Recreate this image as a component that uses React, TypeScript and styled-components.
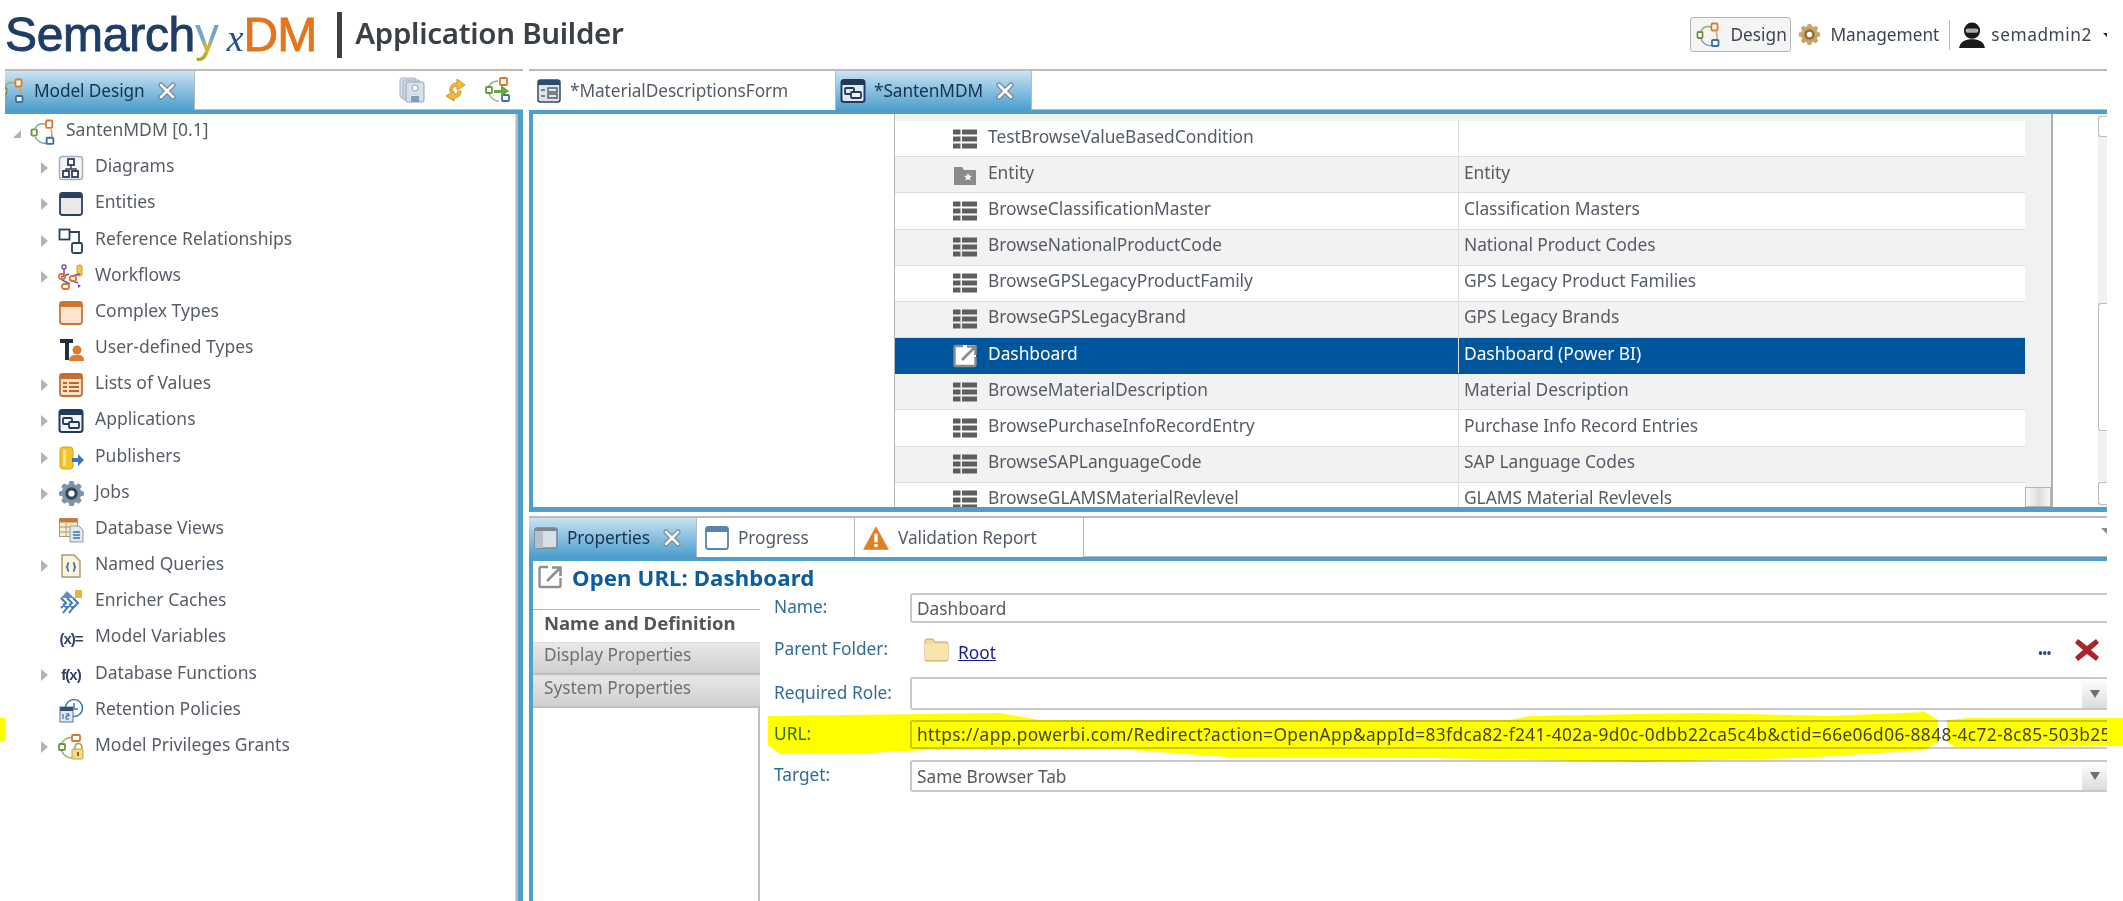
import React from "react";
import styled, { createGlobalStyle } from "styled-components";

const Global = createGlobalStyle`
  html, body { margin: 0; padding: 0; background: #fff; }
  body { font-family: "Noto Sans", "Liberation Sans", sans-serif; overflow: hidden; }
`;
const UI = `"Noto Sans", "Liberation Sans", sans-serif`;
const BLUE = "#4d9fcd";

const Page = styled.div`
  position: relative; width: 2123px; height: 901px; overflow: hidden; background: #fff;
  display: flex; flex-direction: column;
`;
const Header = styled.header`
  height: 69px; flex: none; display: flex; align-items: flex-start; padding: 0 16px 0 5px; box-sizing: border-box;
`;
const Logo = styled.div`
  display: flex; align-items: baseline; height: 69px; line-height: 69px;
  font-family: "Liberation Sans", sans-serif; font-size: 48px; letter-spacing: -.3px; -webkit-text-stroke: .9px currentColor;
  color: #1f3d66;
`;
const LogoY = styled.span`
  background: linear-gradient(180deg, #6fa6cf 0 55%, #e2b52c 70%, #7f9e35 100%);
  -webkit-background-clip: text; background-clip: text; color: transparent; -webkit-text-stroke: 0;
`;
const LogoX = styled.span`
  font-family: "Liberation Serif", serif; font-style: italic; font-size: 38px; margin-left: 8px; color: #1f4f86; -webkit-text-stroke: 0; letter-spacing: 0;
`;
const LogoDM = styled.span` color: #e4751b; letter-spacing: -1px; `;
const TitleBar = styled.div`
  width: 5px; height: 46px; background: #3b4047; margin: 12px 13px 0 21px;
`;
const Title = styled.div`
  font-family: ${UI}; font-size: 29.5px; font-weight: 600; color: #3b4047; line-height: 66px; letter-spacing: -.3px;
`;
const HeaderRight = styled.div`
  margin-left: auto; display: flex; align-items: center; height: 69px; font-size: 17.3px; color: #3d4452; box-sizing: border-box;
`;
const DesignBtn = styled.div`
  width: 101px; height: 35px; box-sizing: border-box; border: 1px solid #b4b4b4; border-radius: 3px; background: #f4f4f4;
  display: flex; align-items: center; gap: 8px; padding-left: 5px; margin-right: 7px;
`;
const HeaderLink = styled.span<{ $ml: number; $ls?: number }>`
  margin: 0 9px 0 ${p => p.$ml}px; letter-spacing: ${p => p.$ls || 0}px;
`;
const VSep = styled.div` width: 1px; height: 30px; background: #bbb; margin: 0 8px 0 1px; `;
const Caret = styled.div`
  width: 0; height: 0; border-top: 4px solid #222; border-left: 4px solid transparent; margin-left: 2px;
`;
const Main = styled.div`
  flex: 1; display: flex; gap: 6px; padding: 0 16px 0 5px; min-height: 0;
`;
const LeftPanel = styled.section`
  width: 518px; flex: none; display: flex; flex-direction: column;
`;
const RightPanel = styled.section`
  flex: 1; min-width: 0; display: flex; flex-direction: column;
`;
const TabBar = styled.div`
  height: 41px; flex: none; box-sizing: border-box; border-top: 2px solid #bcbcbc; display: flex;
  border-bottom: 1px solid #bbb; align-items: stretch;
`;
const Tab = styled.div<{ $w: number; $active?: boolean; $clip?: boolean }>`
  width: ${p => p.$w}px; flex: none; box-sizing: border-box; display: flex; align-items: center; gap: 8px; padding-left: ${p => (p.$clip ? 0 : p.$active ? 4 : 7)}px;
  font-size: 17.3px; letter-spacing: -.1px;
  color: ${p => (p.$active ? "#17324c" : "#555c66")};
  background: ${p => (p.$active ? "linear-gradient(180deg,#cbe3f2 0%,#8fc3e2 45%,#4d9fcd 100%)" : "#fff")};
  border-right: 1px solid #b9b9b9; white-space: nowrap; overflow: hidden;
  margin-bottom: -1px;
`;
const ClippedIcon = styled.span` margin-left: -5px; display: inline-flex; `;
const BlueLine = styled.div` height: 4px; flex: none; background: ${BLUE}; `;
const Close = styled.span`
  margin-left: 5px; display: inline-flex;
`;
const ToolBar = styled.div`
  margin-left: auto; display: flex; align-items: center; gap: 17px; padding-right: 12px;
`;
const TreeBody = styled.div`
  flex: 1; box-sizing: border-box; border-right: 5px solid ${BLUE}; box-shadow: inset -2.5px 0 0 #b8b8b8; min-height: 0;
`;
const TreeRow = styled.div<{ $root?: boolean }>`
  height: 36.18px; display: flex; align-items: center; padding-left: ${p => (p.$root ? 8 : 36)}px; font-size: 17.5px; color: #575d66;
`;
const ArrowSlot = styled.div`
  width: 7px; height: 14px; flex: none; display: flex; align-items: center;
`;
const Arrow = styled.div`
  width: 0; height: 0; border-left: 7px solid #b3b3b3; border-top: 6px solid transparent; border-bottom: 6px solid transparent;
`;
const RootArrow = styled.div`
  width: 0; height: 0; border-right: 8px solid #b3b3b3; border-top: 8px solid transparent; margin-top: 4px;
`;
const IconSlot = styled.div`
  width: 28px; flex: none; display: flex; justify-content: center; align-items: center; margin-left: 9px;
`;
const TreeLabel = styled.span<{ $root?: boolean }>`
  margin-left: ${p => (p.$root ? 9 : 10)}px; margin-top: -6px; white-space: nowrap;
`;
const GlyphIcon = styled.span<{ $size: number }>`
  font-family: "Liberation Sans", sans-serif; font-weight: 700; color: #2f4260; font-size: ${p => p.$size}px; white-space: nowrap; letter-spacing: -1px;
`;
const TopPane = styled.div`
  height: 398px; flex: none; display: flex; border-left: 4px solid ${BLUE}; border-bottom: 5px solid ${BLUE}; overflow: hidden; box-sizing: border-box;
`;
const TableWrap = styled.div`
  width: 1159px; margin-left: 361px; flex: none; box-sizing: border-box; border-left: 1px solid #b5b5b5; border-right: 2px solid #b0b0b0; background: #f1f1f1; display: flex; overflow: hidden;
`;
const Rows = styled.div`
  width: 1130px; flex: none; padding-top: 7px; box-sizing: border-box;
`;
const Row = styled.div<{ $alt?: boolean; $sel?: boolean }>`
  height: 36.18px; box-sizing: border-box; display: grid; grid-template-columns: 564px 1fr; align-items: center;
  border-bottom: 1px solid ${p => (p.$sel ? "#00569d" : "#dedede")};
  background: ${p => (p.$sel ? "#00569d" : p.$alt ? "#f2f2f2" : "#fff")};
  color: ${p => (p.$sel ? "#fff" : "#565c65")}; font-size: 17.4px; letter-spacing: -.05px; white-space: nowrap;
`;
const NameCell = styled.div`
  display: flex; align-items: center; padding-left: 57px; gap: 10px; height: 100%; border-right: 1px solid #dedede; box-sizing: border-box;
`;
const CellText = styled.span` margin-top: -6px; `;
const SecondCell = styled.div` padding-left: 5px; margin-top: -6px; `;
const Thumb = styled.div`
  margin-top: auto; width: 100%; height: 20px; box-sizing: border-box; border: 1px solid #b5b5b5; background: linear-gradient(90deg,#fafafa,#dcdcdc 55%,#f8f8f8);
`;
const ScrollCol = styled.div` flex: 1; display: flex; flex-direction: column; `;
const SideSpace = styled.div` flex: 1; background: #fff; `;
const Strip = styled.div`
  width: 9px; flex: none; background: #f1f1f1; display: flex; flex-direction: column; align-items: stretch; padding-top: 2px;
`;
const StripBtn = styled.div<{ $h: number; $mt: number }>`
  height: ${p => p.$h}px; margin-top: ${p => p.$mt}px; box-sizing: border-box; background: #fff; border: 1px solid #bdbdbd; border-right: 0; border-radius: 3px 0 0 3px;
`;
const Gap = styled.div` height: 4px; flex: none; `;
const ViewMenu = styled.div`
  margin-left: auto; margin-top: 10px; width: 0; height: 0; border-top: 6px solid #8d8d8d; border-left: 6px solid transparent;
`;
const BottomPane = styled.div`
  flex: 1; min-height: 0; display: flex; flex-direction: column; border-left: 4px solid ${BLUE}; box-sizing: border-box;
`;
const Heading = styled.div`
  height: 32px; flex: none; display: flex; align-items: center; gap: 9px; padding-left: 4px; box-sizing: border-box;
  font-size: 22.2px; font-weight: 700; color: #0c5d9f; letter-spacing: .1px;
`;
const Body = styled.div` flex: 1; display: flex; min-height: 0; `;
const Sidebar = styled.div`
  width: 227px; flex: none; box-sizing: border-box; padding-top: 16px;
`;
const SideInner = styled.div`
  height: 100%; border-right: 2px solid #c0c0c0; border-top: 1px solid #b5b5b5;
`;
const SideItem = styled.div<{ $active?: boolean }>`
  height: ${p => (p.$active ? 32 : 33)}px; box-sizing: border-box; padding-left: 11px; font-size: ${p => (p.$active ? 18.5 : 17.3)}px; white-space: nowrap;
  display: flex; align-items: center; margin-right: -2px; padding-bottom: ${p => (p.$active ? 7 : 7)}px;
  font-weight: ${p => (p.$active ? 700 : 400)};
  color: ${p => (p.$active ? "#555" : "#707070")};
  background: ${p => (p.$active ? "#fff" : "linear-gradient(180deg,#e8e8e8,#cfcfcf)")};
  border-bottom: ${p => (p.$active ? "0" : "2px solid #c0c0c0")};
  border-top: ${p => (p.$active ? "0" : "1px solid #ddd")};
`;
const Form = styled.div`
  flex: 1; min-width: 0; display: grid; grid-template-columns: 136px 1fr; grid-auto-rows: min-content; padding-left: 14px; font-size: 17.3px; color: #2f6c97;
`;
const Label = styled.div<{ $h: number; $mb?: number }>`
  height: ${p => p.$h}px; margin-bottom: ${p => p.$mb || 0}px; display: flex; align-items: center; padding-bottom: 3px; box-sizing: border-box; white-space: nowrap;
`;
const Field = styled.div<{ $h: number; $mb?: number }>`
  position: relative; height: ${p => p.$h}px; margin-bottom: ${p => p.$mb || 0}px; box-sizing: border-box; border: 2px solid #c8c8c8; border-radius: 3px 0 0 3px; border-right: 0;
  color: #5a5a5a; font-size: 17.3px; padding-left: 5px; display: flex; align-items: center; overflow: hidden; white-space: nowrap;
`;
const UrlText = styled.span` color: #444; letter-spacing: .38px; `;
const Drop = styled.div`
  position: absolute; right: 0; top: 0; bottom: 0; width: 25px; background: linear-gradient(180deg,#fff,#dcdcdc); display: flex; align-items: center; justify-content: center;
  &::after { content: ""; border-top: 8px solid #6f6f6f; border-left: 5px solid transparent; border-right: 5px solid transparent; }
`;
const ParentRow = styled.div`
  height: 54px; display: flex; align-items: center; padding-left: 13px; gap: 9px; box-sizing: border-box;
`;
const RootLink = styled.a`
  color: #1e1a8a; text-decoration: underline; font-size: 17.3px; margin-top: 4px;
`;
const Dots = styled.span`
  margin-left: auto; color: #2f4f7a; font-weight: 700; font-size: 12px; letter-spacing: -.3px; margin-top: 6px;
`;
const RemoveX = styled.span` margin: 0 7px 0 15px; display: inline-flex; `;
const MarkerOverlay = styled.svg`
  position: absolute; left: 0; top: 0; pointer-events: none; mix-blend-mode: multiply;
`;

const Svg = ({ s = 26, children }: { s?: number; children: React.ReactNode }) => (
  <svg width={s} height={s} viewBox="0 0 26 26" fill="none">{children}</svg>
);

const ModelIco = ({ s = 26 }: { s?: number }) => (
  <Svg s={s}>
    <path d="M5 17c2 5 7 7 11 6.500" stroke="#7f9db8" strokeWidth="1.400" />
    <path d="M5 9C7 5 11 4 15 5" stroke="#8fb06a" strokeWidth="1.400" />
    <path d="M20 10c1.500 3 1.500 6 .5 9" stroke="#e09a5a" strokeWidth="1.400" />
    <rect x="1.500" y="10" width="5" height="6" rx="1" fill="#fff" stroke="#6d9440" strokeWidth="1.800" />
    <rect x="15.500" y="1.500" width="6" height="7" rx="1" fill="#fff" stroke="#d97a2e" strokeWidth="1.800" />
    <rect x="16" y="18" width="6.500" height="6" rx="1" fill="#fff" stroke="#3c6ea8" strokeWidth="1.800" />
  </Svg>
);
const DiagramIco = () => (
  <Svg>
    <rect x="1.500" y="1.500" width="23" height="23" rx="3" fill="#f4f4f4" stroke="#a9adb3" strokeWidth="1.500" />
    <rect x="10" y="4" width="6" height="6" fill="#fff" stroke="#2c3e59" strokeWidth="1.800" />
    <path d="M13 10v4M8 17v-3h10v3" stroke="#2c3e59" strokeWidth="1.400" />
    <rect x="5" y="16" width="6" height="6" fill="#fff" stroke="#2c3e59" strokeWidth="1.800" />
    <rect x="14" y="16" width="6" height="6" fill="#fff" stroke="#2c3e59" strokeWidth="1.800" />
  </Svg>
);
const WinIco = ({ c = "#2b4160", f = "#e4e4e4" }: { c?: string; f?: string }) => (
  <Svg>
    <rect x="2" y="2" width="22" height="22" rx="2.500" fill={f} stroke={c} strokeWidth="1.800" />
    <rect x="2" y="2" width="22" height="5" fill={c} />
  </Svg>
);
const RefIco = () => (
  <Svg>
    <rect x="1.500" y="1.500" width="10" height="10" fill="#fff" stroke="#2b4160" strokeWidth="1.800" />
    <path d="M12 4h9v11" stroke="#2b4160" strokeWidth="1.800" />
    <rect x="14" y="15" width="10" height="10" rx="1.500" fill="#fff" stroke="#2b4160" strokeWidth="1.800" />
  </Svg>
);
const FlowIco = () => (
  <Svg>
    <rect x="19" y="1" width="5" height="11" rx="2" fill="#f0c84a" stroke="#cf9a27" />
    <circle cx="6" cy="3" r="2" stroke="#7a4fa5" strokeWidth="1.500" />
    <path d="M6 5v5M3 13l8-3M14 12l8-2M12 16l8 3M4 16l8 4" stroke="#7a4fa5" strokeWidth="1.500" />
    <rect x="1" y="10" width="6" height="5" rx="2" stroke="#d9772b" strokeWidth="1.800" />
    <rect x="12" y="12" width="6" height="5" rx="2" stroke="#d9772b" strokeWidth="1.800" />
    <rect x="4" y="20" width="7" height="5" rx="2" stroke="#d9772b" strokeWidth="1.800" />
    <path d="M20 20l3 2-3 2z" fill="#7a4fa5" />
  </Svg>
);
const ComplexIco = () => <WinIco c="#cc7433" f="#fde4cf" />;
const UserTypeIco = () => (
  <Svg>
    <path d="M2 3h13v4h-4v17H7V7H2z" fill="#1e2f4a" />
    <circle cx="19" cy="14" r="4.500" fill="#dd7a32" />
    <path d="M11 25c0-5 3-6 8-6s7 1 7 6z" fill="#dd7a32" />
  </Svg>
);
const ListIco = () => (
  <Svg>
    <rect x="2" y="2" width="22" height="22" rx="2.500" fill="#fbe0c8" stroke="#c76f33" strokeWidth="1.800" />
    <rect x="2" y="2" width="22" height="5" fill="#c76f33" />
    <path d="M5 11h4M5 15h4M5 19h4M11 11h10M11 15h10M11 19h10" stroke="#b5642e" strokeWidth="2" />
  </Svg>
);
const AppIco = ({ dark = false }: { dark?: boolean }) => (
  <Svg>
    <rect x="1.500" y="2" width="23" height="22" rx="2.500" fill={dark ? "#dfeaf3" : "#f1f4f7"} stroke="#223a57" strokeWidth="2" />
    <rect x="1.500" y="2" width="23" height="5" fill="#223a57" />
    <rect x="5" y="10" width="9" height="6" rx="1" stroke="#223a57" strokeWidth="1.800" />
    <rect x="11" y="14" width="10" height="6" rx="1" fill="#f1f4f7" stroke="#223a57" strokeWidth="1.800" />
  </Svg>
);
const PubIco = () => (
  <Svg>
    <rect x="2" y="2" width="13" height="22" rx="3" fill="#f0c531" stroke="#d9a521" />
    <rect x="5" y="5" width="3" height="16" fill="#fbe38a" />
    <path d="M14 13h6V9l6 6-6 6v-4h-6z" fill="#3f79b5" />
  </Svg>
);
const GearShape = ({ c, i }: { c: string; i: string }) => (
  <>
    {[0, 45, 90, 135].map(a => (
      <rect key={a} x="10.500" y="1" width="5" height="24" rx="1.500" fill={c} transform={`rotate(${a} 13 13)`} />
    ))}
    <circle cx="13" cy="13" r="9.500" fill={c} />
    <circle cx="13" cy="13" r="6" fill={i} />
    <circle cx="13" cy="13" r="3" fill="#fff" />
  </>
);
const GearIco = ({ s = 27 }: { s?: number }) => <Svg s={s}><GearShape c="#7f94a8" i="#35475c" /></Svg>;
const MgmtGear = () => <Svg s={23}><GearShape c="#c9a56a" i="#8f6f3c" /></Svg>;
const DbViewIco = () => (
  <Svg>
    <rect x="1.500" y="1.500" width="18" height="18" fill="#f5eedb" stroke="#a99b72" />
    <rect x="1.500" y="1.500" width="18" height="4" fill="#c9782f" />
    <path d="M2 10h17M2 15h17M8 6v13" stroke="#a99b72" />
    <path d="M12 9h9l4 4v12H12z" fill="#dfe8f4" stroke="#9a9a80" />
    <path d="M15 15h7M15 18h7M15 21h7" stroke="#3d73b1" strokeWidth="1.500" />
  </Svg>
);
const QueryIco = () => (
  <Svg>
    <path d="M4 2h12l6 6v16H4z" fill="#fbf5dd" stroke="#a79c70" strokeWidth="1.500" />
    <path d="M11 10c-2 0-1 3-2 4 1 1 0 4 2 4M15 10c2 0 1 3 2 4-1 1 0 4-2 4" stroke="#3d73b1" strokeWidth="1.800" />
  </Svg>
);
const EnrichIco = () => (
  <Svg>
    <path d="M9 2l7 7H3z" fill="#5f8fc4" />
    <rect x="17" y="1" width="7" height="8" fill="#e8b73a" />
    <path d="M3 9l5 5-5 5M9 9l5 5-5 5M15 9l5 5-5 5M5 15l4 4-4 5M11 15l4 4-4 5" stroke="#3f79c0" strokeWidth="2" />
  </Svg>
);
const RetentionIco = () => (
  <Svg>
    <circle cx="16" cy="10" r="8.500" fill="#fff" stroke="#3f7fb0" strokeWidth="1.600" />
    <path d="M16 5v6h4" stroke="#3f7fb0" strokeWidth="1.500" />
    <rect x="2" y="9" width="13" height="15" fill="#dfe9f2" stroke="#5b7590" />
    <rect x="2" y="9" width="13" height="4" fill="#2f5377" />
    <path d="M5 16v5M8 16h3v2H8v3h3" stroke="#2f5377" />
  </Svg>
);
const PrivIco = () => (
  <Svg>
    <path d="M16 4C9 2 3 7 3 13c0 6 5 11 11 11" stroke="#8eb06d" strokeWidth="1.400" />
    <rect x="1" y="10" width="6" height="6" rx="1" fill="#fff" stroke="#6d9440" strokeWidth="1.800" />
    <rect x="14" y="1" width="8" height="6" rx="1" fill="#fff" stroke="#d9772b" strokeWidth="1.800" />
    <path d="M17 15v-2a3.500 3.500 0 017 0v2" stroke="#b99a3c" strokeWidth="1.600" />
    <rect x="14" y="15" width="11" height="10" rx="1" fill="#f3d98a" stroke="#c2a24a" />
    <rect x="19" y="18" width="2" height="4" fill="#8a6f21" />
  </Svg>
);
const ListRowIco = () => (
  <Svg>
    <path d="M1 3.500h7.500v5H1zM10 3.500h15v5H10zM1 10.500h7.500v5H1zM10 10.500h15v5H10zM1 17.500h7.500v5H1zM10 17.500h15v5H10z" fill="#5e5e5e" />
  </Svg>
);
const FolderStarIco = () => (
  <Svg>
    <path d="M2 5h8l2 3h12v15H2z" fill="#8b8b8b" />
    <path d="M16 11l1.200 2.600 2.800.3-2.100 1.900.6 2.800-2.500-1.400-2.500 1.400.6-2.800-2.100-1.900 2.800-.3z" fill="#f4f4f4" />
  </Svg>
);
const OpenUrlIco = ({ s = 26, c = "#8f8f8f", bg = "none" }: { s?: number; c?: string; bg?: string }) => (
  <Svg s={s}>
    <rect x="2" y="2" width="22" height="22" rx="2" fill={bg} />
    <path d="M11 3H4a1.500 1.500 0 00-1.500 1.500v17A1.500 1.500 0 004 23h18a1.500 1.500 0 001.500-1.500V14" stroke={c} strokeWidth="2.400" />
    <path d="M10 17L22 5M15 3.500h8.500V12" stroke={c} strokeWidth="2.600" />
  </Svg>
);
const CloseIco = ({ s = 18, c = "#fff", o = "#6f7f8c" }: { s?: number; c?: string; o?: string }) => (
  <svg width={s} height={s} viewBox="0 0 18 18" fill="none">
    <path d="M3 3l12 12M15 3L3 15" stroke={o} strokeWidth="5" strokeLinecap="round" />
    <path d="M3 3l12 12M15 3L3 15" stroke={c} strokeWidth="2.800" strokeLinecap="round" />
  </svg>
);
const SaveStack = () => (
  <Svg>
    <rect x="1" y="1" width="16" height="20" rx="2" fill="#d5dde6" stroke="#a9b6c4" />
    <rect x="4" y="3" width="17" height="20" rx="2" fill="#cfd8e2" stroke="#a9b6c4" />
    <rect x="7" y="5" width="18" height="20" rx="2" fill="#d7e0ea" stroke="#8ea4bb" />
    <circle cx="16" cy="11" r="3" fill="#fff" stroke="#8ea4bb" />
    <rect x="12" y="19" width="8" height="6" fill="#7e9cbc" />
  </Svg>
);
const SyncIco = () => (
  <Svg>
    <path d="M8 15c-1-5 2-9 7-9V2l8 6-8 5V9c-3 0-5 2-5 5z" fill="#f0b93a" stroke="#cf9422" />
    <path d="M19 14c0 4-3 7-7 7v3l-8-5 8-5v3c2 0 4-1 4-3z" fill="#f0b93a" stroke="#cf9422" />
  </Svg>
);
const ModelGo = () => (
  <Svg>
    <path d="M13 4C7 4 3 8 3 13s5 11 11 11" stroke="#8eb06d" strokeWidth="1.400" />
    <rect x="15" y="1" width="7" height="7" rx="1" fill="#fff" stroke="#d9772b" strokeWidth="1.800" />
    <rect x="1" y="10" width="6" height="6" rx="1" fill="#fff" stroke="#6d9440" strokeWidth="1.800" />
    <rect x="17" y="18" width="7" height="6" rx="1" fill="#fff" stroke="#3c6ea8" strokeWidth="1.800" />
    <path d="M9 13h7V8l8 6-8 6v-4H9z" fill="#66a83a" />
  </Svg>
);
const UserIco = () => (
  <Svg s={28}>
    <circle cx="13" cy="9" r="7.500" fill="#1a1a1a" />
    <rect x="7" y="7" width="12" height="4" rx="2" fill="#aaa" />
    <path d="M1 25c1-6 6-8 12-8s11 2 12 8z" fill="#1a1a1a" />
  </Svg>
);
const WarnIco = () => (
  <Svg s={28}>
    <path d="M13 2L25 24H1z" fill="#e17f25" />
    <rect x="11.500" y="9" width="3" height="8" fill="#fff" />
    <rect x="11.500" y="18.500" width="3" height="3" fill="#fff" />
  </Svg>
);
const PropsIco = () => (
  <Svg>
    <rect x="2" y="3" width="22" height="20" rx="2" fill="#d9dfe6" stroke="#7d8794" strokeWidth="1.600" />
    <rect x="2" y="3" width="8" height="20" fill="#b8c0ca" />
    <rect x="2" y="3" width="22" height="3" fill="#7d8794" />
  </Svg>
);
const FolderIco = () => (
  <Svg>
    <path d="M2 4a2 2 0 012-2h6l2 3h11a2 2 0 012 2v15a2 2 0 01-2 2H3a2 2 0 01-1-2z" fill="#f7d998" stroke="#c9a35c" />
    <rect x="2" y="7" width="23" height="16" rx="1" fill="#fbe3ad" />
  </Svg>
);
const RedX = () => (
  <svg width="25" height="24" viewBox="0 0 25 24">
    <path d="M3 1l9 7 9-7 3 4-8 7 8 7-3 4-9-7-9 7-3-4 8-7-8-7z" fill="#a8252c" />
  </svg>
);
const FormTabIco = () => (
  <Svg>
    <rect x="2" y="2" width="22" height="22" rx="2.500" fill="#dfe3e8" stroke="#33495f" strokeWidth="1.500" />
    <rect x="2" y="2" width="22" height="5" fill="#2b4c72" />
    <path d="M5 12h4M5 18h4M12 10h9v4h-9zM12 16h9v4h-9z" stroke="#55606c" strokeWidth="1.500" />
  </Svg>
);

type TreeItem = { label: string; icon: React.ReactNode; arrow?: boolean };
const tree: TreeItem[] = [
  { label: "Diagrams", icon: <DiagramIco />, arrow: true },
  { label: "Entities", icon: <WinIco f="#e9e9ea" />, arrow: true },
  { label: "Reference Relationships", icon: <RefIco />, arrow: true },
  { label: "Workflows", icon: <FlowIco />, arrow: true },
  { label: "Complex Types", icon: <ComplexIco /> },
  { label: "User-defined Types", icon: <UserTypeIco /> },
  { label: "Lists of Values", icon: <ListIco />, arrow: true },
  { label: "Applications", icon: <AppIco />, arrow: true },
  { label: "Publishers", icon: <PubIco />, arrow: true },
  { label: "Jobs", icon: <GearIco />, arrow: true },
  { label: "Database Views", icon: <DbViewIco /> },
  { label: "Named Queries", icon: <QueryIco />, arrow: true },
  { label: "Enricher Caches", icon: <EnrichIco /> },
  { label: "Model Variables", icon: <GlyphIcon $size={15}>(x)=</GlyphIcon> },
  { label: "Database Functions", icon: <GlyphIcon $size={15}>f(x)</GlyphIcon>, arrow: true },
  { label: "Retention Policies", icon: <RetentionIco /> },
  { label: "Model Privileges Grants", icon: <PrivIco />, arrow: true },
];

type TableRow = { a: string; b: string; kind?: "folder" | "sel" };
const rows: TableRow[] = [
  { a: "TestBrowseValueBasedCondition", b: "" },
  { a: "Entity", b: "Entity", kind: "folder" },
  { a: "BrowseClassificationMaster", b: "Classification Masters" },
  { a: "BrowseNationalProductCode", b: "National Product Codes" },
  { a: "BrowseGPSLegacyProductFamily", b: "GPS Legacy Product Families" },
  { a: "BrowseGPSLegacyBrand", b: "GPS Legacy Brands" },
  { a: "Dashboard", b: "Dashboard (Power BI)", kind: "sel" },
  { a: "BrowseMaterialDescription", b: "Material Description" },
  { a: "BrowsePurchaseInfoRecordEntry", b: "Purchase Info Record Entries" },
  { a: "BrowseSAPLanguageCode", b: "SAP Language Codes" },
  { a: "BrowseGLAMSMaterialRevlevel", b: "GLAMS Material Revlevels" },
];

const URL_VALUE = "https://app.powerbi.com/Redirect?action=OpenApp&appId=83fdca82-f241-402a-9d0c-0dbb22ca5c4b&ctid=66e06d06-8848-4c72-8c85-503b25";

export default function App() {
  return (
    <Page>
      <Global />
      <Header>
        <Logo>
          <span>Semarch</span><LogoY>y</LogoY><LogoX>x</LogoX><LogoDM>DM</LogoDM>
        </Logo>
        <TitleBar />
        <Title>Application Builder</Title>
        <HeaderRight>
          <DesignBtn><ModelIco />Design</DesignBtn>
          <MgmtGear />
          <HeaderLink $ml={9}>Management</HeaderLink>
          <VSep />
          <UserIco />
          <HeaderLink $ml={5} $ls={.55}>semadmin2</HeaderLink>
          <Caret />
        </HeaderRight>
      </Header>
      <Main>
        <LeftPanel>
          <TabBar>
            <Tab $w={190} $active $clip>
              <ClippedIcon><ModelIco /></ClippedIcon>
              <span>Model Design</span>
              <Close><CloseIco /></Close>
            </Tab>
            <ToolBar>
              <SaveStack />
              <SyncIco />
              <ModelGo />
            </ToolBar>
          </TabBar>
          <BlueLine />
          <TreeBody>
            <TreeRow $root>
              <ArrowSlot><RootArrow /></ArrowSlot>
              <IconSlot><ModelIco s={27} /></IconSlot>
              <TreeLabel $root>SantenMDM [0.1]</TreeLabel>
            </TreeRow>
            {tree.map(t => (
              <TreeRow key={t.label}>
                <ArrowSlot>{t.arrow && <Arrow />}</ArrowSlot>
                <IconSlot>{t.icon}</IconSlot>
                <TreeLabel>{t.label}</TreeLabel>
              </TreeRow>
            ))}
          </TreeBody>
        </LeftPanel>
        <RightPanel>
          <TabBar>
            <Tab $w={307}>
              <FormTabIco />
              <span>*MaterialDescriptionsForm</span>
            </Tab>
            <Tab $w={196} $active>
              <AppIco dark />
              <span>*SantenMDM</span>
              <Close><CloseIco /></Close>
            </Tab>
          </TabBar>
          <BlueLine />
          <TopPane>
            <TableWrap>
              <Rows>
                {rows.map(r => (
                  <Row key={r.a} $alt={rows.indexOf(r) % 2 === 1} $sel={r.kind === "sel"}>
                    <NameCell>
                      {r.kind === "sel" ? <OpenUrlIco c="#8a8a8a" bg="#fff" /> : r.kind === "folder" ? <FolderStarIco /> : <ListRowIco />}
                      <CellText>{r.a}</CellText>
                    </NameCell>
                    <SecondCell>{r.b}</SecondCell>
                  </Row>
                ))}
              </Rows>
              <ScrollCol><Thumb /></ScrollCol>
            </TableWrap>
            <SideSpace />
            <Strip>
              <StripBtn $h={21} $mt={0} />
              <StripBtn $h={128} $mt={166} />
              <StripBtn $h={23} $mt={51} />
            </Strip>
          </TopPane>
          <Gap />
          <TabBar>
            <Tab $w={168} $active>
              <PropsIco />
              <span>Properties</span>
              <Close><CloseIco c="#fff" /></Close>
            </Tab>
            <Tab $w={158}>
              <WinIco c="#5a83ad" f="#fff" />
              <span>Progress</span>
            </Tab>
            <Tab $w={229}>
              <WarnIco />
              <span>Validation Report</span>
            </Tab>
            <ViewMenu />
          </TabBar>
          <BlueLine />
          <BottomPane>
            <Heading><OpenUrlIco />Open URL: Dashboard</Heading>
            <Body>
              <Sidebar>
                <SideInner>
                  <SideItem $active>Name and Definition</SideItem>
                  <SideItem>Display Properties</SideItem>
                  <SideItem>System Properties</SideItem>
                </SideInner>
              </Sidebar>
              <Form>
                <Label $h={30}>Name:</Label>
                <Field $h={30}>Dashboard</Field>
                <Label $h={54}>Parent Folder:</Label>
                <ParentRow>
                  <FolderIco />
                  <RootLink>Root</RootLink>
                  <Dots>•••</Dots>
                  <RemoveX><RedX /></RemoveX>
                </ParentRow>
                <Label $h={33} $mb={10}>Required Role:</Label>
                <Field $h={33} $mb={10}><Drop /></Field>
                <Label $h={29} $mb={11}>URL:</Label>
                <Field $h={29} $mb={11}><UrlText>{URL_VALUE}</UrlText></Field>
                <Label $h={32}>Target:</Label>
                <Field $h={32}>Same Browser Tab<Drop /></Field>
              </Form>
            </Body>
          </BottomPane>
        </RightPanel>
      </Main>
      <MarkerOverlay width="2123" height="901" viewBox="0 0 2123 901">
        <path d="M768 716L1000 713L1040 720L1510 720L1530 716L1700 713L1830 716L1925 712L1938 720L1938 742L1925 750L1800 758L1640 762L1430 758L1230 757L1130 750L925 750L850 754L780 754L768 745Z" fill="#ffff00" />
        <path d="M1947 720L1970 718L2123 718L2123 746L1990 747L1955 747L1947 742Z" fill="#ffff00" />
        <rect x="0" y="718" width="5" height="24" fill="#ffff00" />
      </MarkerOverlay>
    </Page>
  );
}
